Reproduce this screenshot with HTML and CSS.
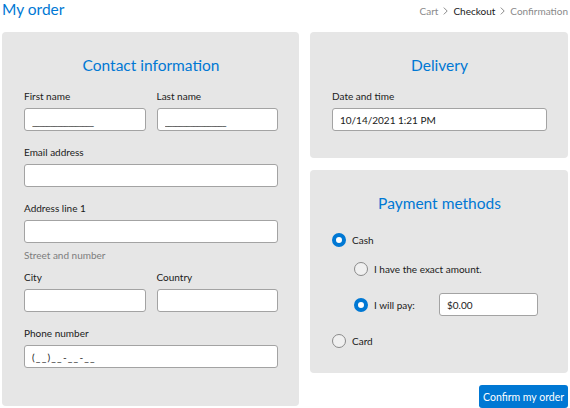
FILE: index.html
```html
<!DOCTYPE html>
<html lang="en">
<head>
<meta charset="utf-8">
<title>My order</title>
<link rel="stylesheet" href="styles.css">
</head>
<body>
<header class="top">
  <h1 class="page-title">My order</h1>
  <nav class="crumbs">
    <span class="crumb">Cart</span><svg class="chev" viewBox="0 0 5 8"><path d="M0.8 0.6L4.2 4L0.8 7.4"/></svg><span class="crumb current">Checkout</span><svg class="chev" viewBox="0 0 5 8"><path d="M0.8 0.6L4.2 4L0.8 7.4"/></svg><span class="crumb">Confirmation</span>
  </nav>
</header>
<main class="layout">
  <section class="card contact">
    <h2 class="card-title">Contact information</h2>
    <div class="pair">
      <div class="field"><label class="label" for="fn">First name</label><input class="box line" id="fn" type="text" value="_________________"></div>
      <div class="field"><label class="label" for="ln">Last name</label><input class="box line" id="ln" type="text" value="_________________"></div>
    </div>
    <div class="field"><label class="label" for="em">Email address</label><input class="box" id="em" type="text"></div>
    <div class="field has-hint"><label class="label" for="ad">Address line 1</label><input class="box" id="ad" type="text"><div class="hint">Street and number</div></div>
    <div class="pair">
      <div class="field"><label class="label" for="ci">City</label><input class="box" id="ci" type="text"></div>
      <div class="field"><label class="label" for="co">Country</label><input class="box" id="co" type="text"></div>
    </div>
    <div class="field"><label class="label" for="ph">Phone number</label><input class="box masked" id="ph" type="text" value="(__)__-__-__"></div>
  </section>
  <div class="side">
    <section class="card delivery">
      <h2 class="card-title">Delivery</h2>
      <div class="field"><label class="label" for="dt">Date and time</label><input class="box" id="dt" type="text" value="10/14/2021 1:21 PM"></div>
    </section>
    <section class="card payment">
      <h2 class="card-title">Payment methods</h2>
      <div class="options">
        <div class="option"><input class="radio" type="radio" name="method" id="cash" checked><label for="cash">Cash</label></div>
        <div class="sub">
          <div class="option"><input class="radio" type="radio" name="cashopt" id="exact"><label for="exact">I have the exact amount.</label></div>
          <div class="option pay"><input class="radio" type="radio" name="cashopt" id="will" checked><label class="pay-label" for="will">I will pay:</label><input class="box amount" type="text" value="$0.00"></div>
        </div>
        <div class="option card-opt"><input class="radio" type="radio" name="method" id="card"><label for="card">Card</label></div>
      </div>
    </section>
    <button class="confirm" type="button">Confirm my order</button>
  </div>
</main>
</body>
</html>
```
FILE: styles.css
```css
* { box-sizing: border-box; }
body {
  margin: 0;
  padding: 0 2px;
  width: 570px;
  font-family: Lato, "Open Sans", sans-serif;
  font-size: 10px;
  color: #1a1a1a;
  background: #fff;
}
.top {
  height: 32px;
  display: flex;
  justify-content: space-between;
  align-items: baseline;
}
.page-title {
  margin: 0;
  font-size: 15.5px;
  line-height: 19px;
  font-weight: 400;
  color: #0078d4;
}
.crumbs {
  font-size: 10px;
  color: #8a8a8a;
  white-space: nowrap;
}
.crumb.current { color: #1a1a1a; }
.chev {
  width: 5px;
  height: 8px;
  margin: 0 5px;
  fill: none;
  stroke: #8a8a8a;
  stroke-width: 1;
  vertical-align: 0;
}
.layout {
  display: grid;
  grid-template-columns: 297px 258px;
  column-gap: 11px;
  align-items: start;
}
.card {
  background: #e6e6e6;
  border-radius: 4px;
  padding: 23px 21px 27px 22px;
}
.contact { padding-bottom: 38px; }
.card-title {
  margin: 0 0 14px;
  text-align: center;
  font-size: 15.5px;
  line-height: 20px;
  font-weight: 400;
  color: #0078d4;
}
.label {
  display: block;
  line-height: 15px;
  margin-bottom: 4px;
}
.box {
  display: block;
  width: 100%;
  height: 23px;
  margin: 0;
  border: 1px solid #a3a3a3;
  border-radius: 3px;
  background: #fff;
  padding: 0 7px;
  font: inherit;
  color: #1a1a1a;
  outline: none;
}
.line { letter-spacing: -1px; padding-top: 2px; }
.masked { letter-spacing: 1.2px; }
.pair {
  display: grid;
  grid-template-columns: 1fr 1fr;
  column-gap: 11px;
}
.card > * + * { margin-top: 14px; }
.card > .card-title + * { margin-top: 0; }
.card > .has-hint + * { margin-top: 7px; }
.hint {
  margin-top: 5px;
  line-height: 15px;
  color: #7d7d7d;
}
.side {
  display: flex;
  flex-direction: column;
  gap: 12px;
}
.payment { padding-bottom: 22px; }
.payment .card-title { margin-bottom: 17px; }
.options {
  display: flex;
  flex-direction: column;
}
.option {
  display: flex;
  align-items: center;
  gap: 6px;
  height: 20px;
}
.sub {
  display: flex;
  flex-direction: column;
  gap: 14px;
  margin-top: 9px;
  padding-left: 22px;
}
.option.pay { height: 23px; }
.pay-label { width: 59px; flex: none; }
.amount { width: 99px; flex: none; }
.card-opt { margin-top: 15px; }
.radio {
  appearance: none;
  -webkit-appearance: none;
  margin: 0;
  width: 14px;
  height: 14px;
  flex: none;
  border-radius: 50%;
  border: 1px solid #8a8a8a;
  background: #f0f0f0;
}
.radio:checked {
  border: 4.5px solid #0078d4;
  background: #fff;
}
.confirm {
  align-self: flex-end;
  height: 23px;
  padding: 0 4px;
  border: none;
  border-radius: 3px;
  background: #0078d4;
  color: #fff;
  font: inherit;
  font-size: 10.5px;
}
```
